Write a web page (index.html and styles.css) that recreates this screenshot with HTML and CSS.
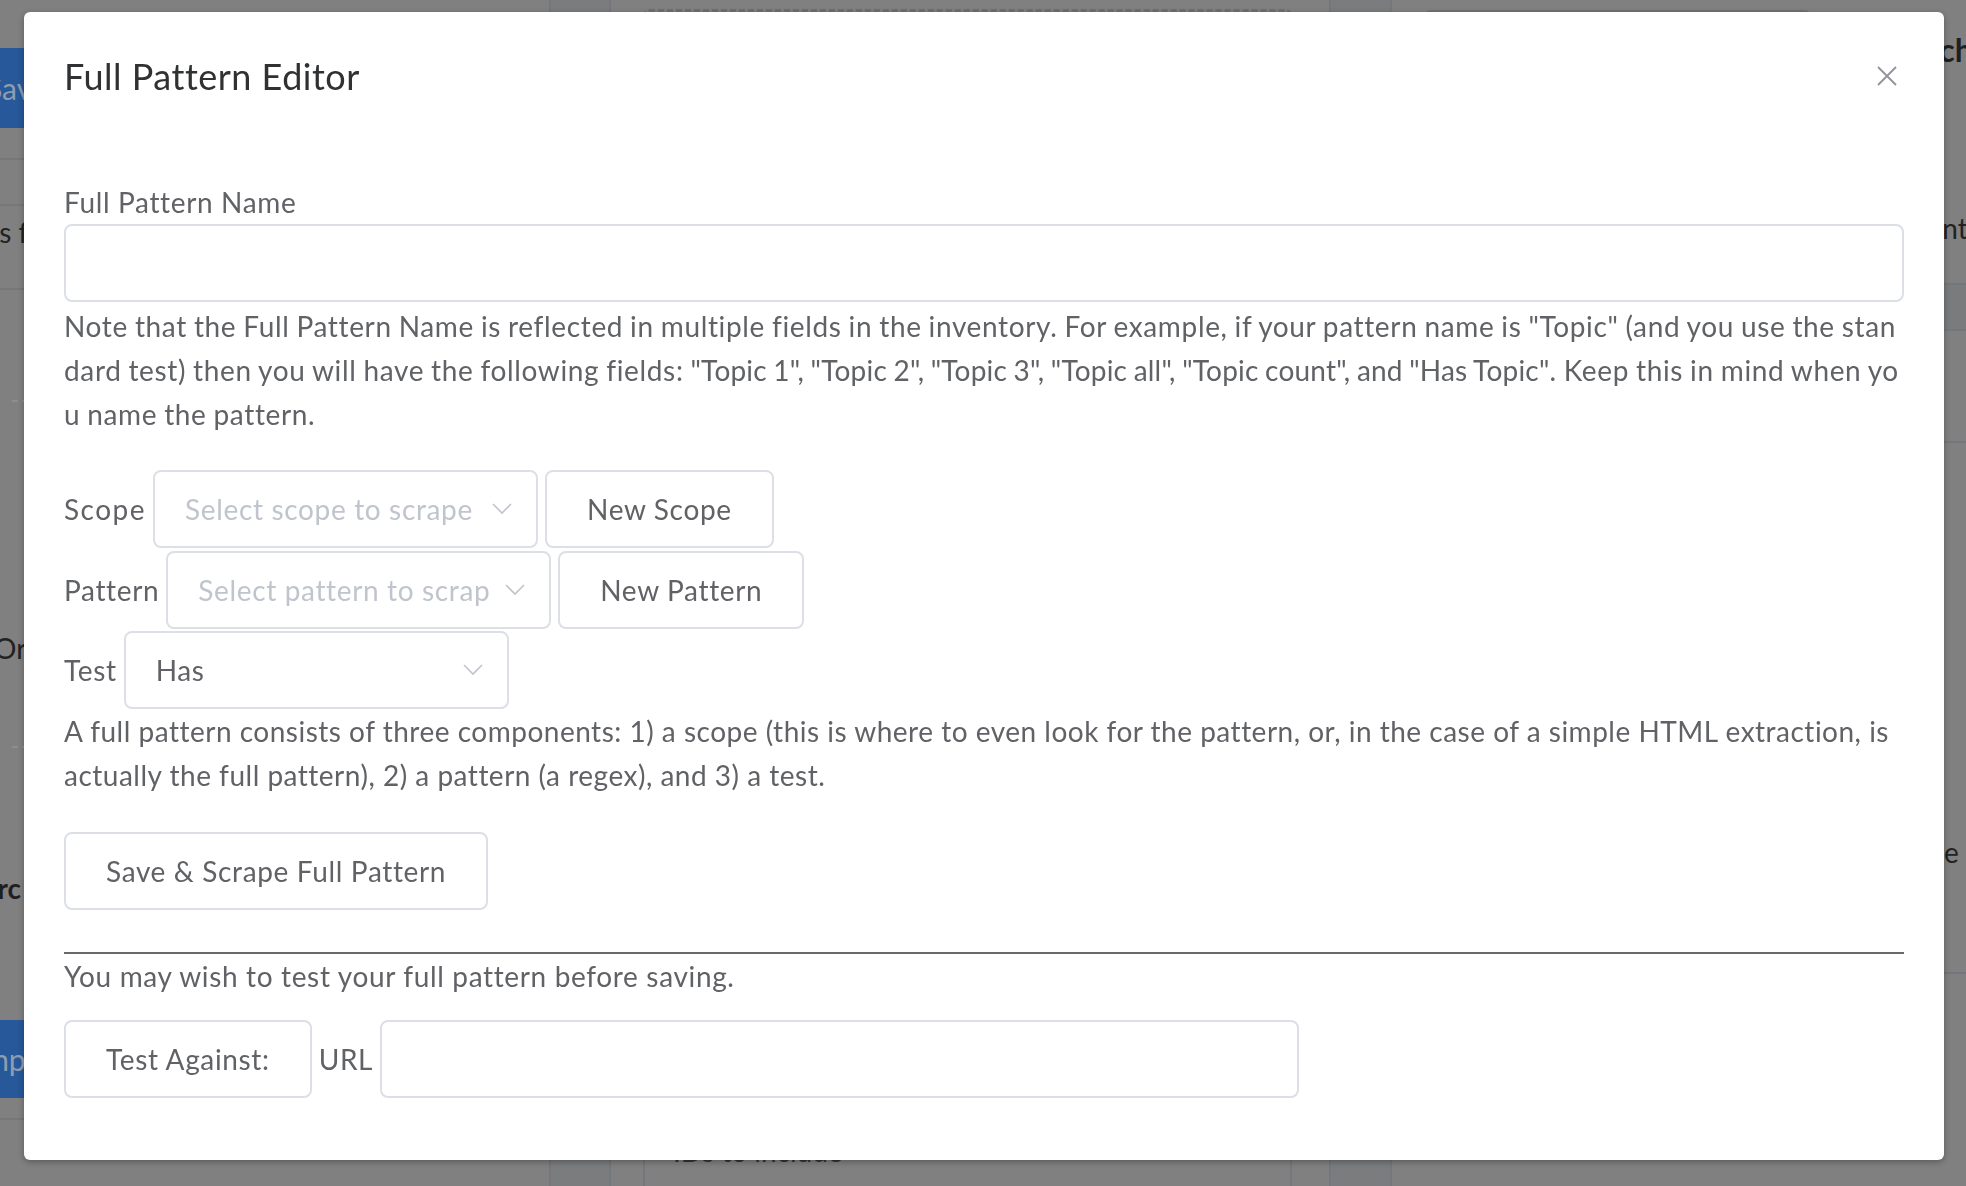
FILE: index.html
```html
<!DOCTYPE html>
<html lang="en">
<head>
<meta charset="utf-8">
<title>Full Pattern Editor</title>
<link rel="stylesheet" href="styles.css">
</head>
<body>
<div class="page">
  <div class="col col-left">
    <div class="bg-btn bg-btn-top">Save</div>
    <div class="bg-row bg-row-a"></div>
    <div class="bg-row bg-row-b"></div>
    <div class="bg-row bg-row-c"><span class="bg-cell">Items for</span></div>
    <div class="bg-dash bg-dash-1"></div>
    <div class="bg-text bg-text-orc">Orc</div>
    <div class="bg-dash bg-dash-2"></div>
    <div class="bg-text bg-text-bold">Arc</div>
    <div class="bg-btn bg-btn-bottom">Imp</div>
    <div class="bg-row bg-row-end"></div>
  </div>
  <div class="col col-strip"></div>
  <div class="col col-mid">
    <div class="bg-dashed-box"></div>
    <div class="bg-table">
      <div class="bg-mid-text">IDs to include</div>
    </div>
  </div>
  <div class="col col-strip2"></div>
  <div class="col col-right">
    <div class="bg-solid-box"></div>
    <div class="bg-right">
      <div class="bg-r1">Search</div>
      <div class="bg-r2">Content</div>
      <div class="bg-band"></div>
      <div class="bg-r3"></div>
      <div class="bg-r4">Some f</div>
      <div class="bg-r5"></div>
    </div>
  </div>
</div>

<div class="dialog-wrapper">
  <div class="dialog">
    <div class="dialog-header">
      <span class="dialog-title">Full Pattern Editor</span>
      <button class="dialog-close" aria-label="Close">
        <svg width="20" height="20" viewBox="0 0 20 20"><path d="M1 1 L19 19 M19 1 L1 19" stroke="#909399" stroke-width="1.8" fill="none"/></svg>
      </button>
    </div>
    <div class="dialog-body">
      <div class="field-label">Full Pattern Name</div>
      <div class="text-input"></div>
      <p class="note note-1">Note that the Full Pattern Name is reflected in multiple fields in the inventory. For example, if your pattern name is "Topic" (and you use the standard test) then you will have the following fields: <span class="terms">"Topic 1", "Topic 2", "Topic 3", "Topic all", "Topic count", and "Has Topic"</span>. Keep this in mind when you name the pattern.</p>

      <div class="inline-row row-first">
        <span class="row-label label-scope">Scope</span>
        <div class="select"><span class="select-text placeholder">Select scope to scrape</span><svg class="chev" width="20" height="12" viewBox="0 0 20 12"><path d="M1 1 L10 10 L19 1" stroke="#c0c4cc" stroke-width="1.6" fill="none"/></svg></div>
        <button class="btn">New Scope</button>
      </div>
      <div class="inline-row">
        <span class="row-label">Pattern</span>
        <div class="select"><span class="select-text placeholder">Select pattern to scrape</span><svg class="chev" width="20" height="12" viewBox="0 0 20 12"><path d="M1 1 L10 10 L19 1" stroke="#c0c4cc" stroke-width="1.6" fill="none"/></svg></div>
        <button class="btn">New Pattern</button>
      </div>
      <div class="inline-row row-last">
        <span class="row-label">Test</span>
        <div class="select"><span class="select-text">Has</span><svg class="chev" width="20" height="12" viewBox="0 0 20 12"><path d="M1 1 L10 10 L19 1" stroke="#c0c4cc" stroke-width="1.6" fill="none"/></svg></div>
      </div>
      <p class="note note-2">A full pattern consists of three components: 1) a scope (this is where to even look for the pattern, or, in the case of a simple HTML extraction, is actually the full pattern), 2) a pattern (a regex), and 3) a test.</p>

      <button class="btn btn-save">Save &amp; Scrape Full Pattern</button>

      <hr class="divider">
      <p class="note note-3">You may wish to test your full pattern before saving.</p>

      <div class="inline-row test-row">
        <button class="btn">Test Against:</button>
        <span class="row-label">URL</span>
        <div class="text-input url-input"></div>
      </div>
    </div>
  </div>
</div>
</body>
</html>
```

FILE: styles.css
```css
html, body {
  margin: 0;
  padding: 0;
  height: 100%;
  overflow: hidden;
}

body {
  background: #808080;
  font-family: "Lato", "Liberation Sans", sans-serif;
}

/* ---------- dimmed background page ---------- */
.page {
  display: flex;
  height: 100vh;
  color: #1b1c1d;
  font-size: 28px;
}

.col {
  position: relative;
  box-sizing: border-box;
  flex: none;
}

.col-left {
  width: 563px;
  margin-left: -14px;
}

.col-strip {
  width: 62px;
  background: #7b7c7e;
  border-left: 2px solid #74777b;
  border-right: 2px solid #74777b;
}

.col-mid {
  width: 718px;
  padding: 9px 37px 0 32px;
  display: flex;
  flex-direction: column;
}

.col-strip2 {
  width: 63px;
  background: #7b7c7e;
  border-left: 2px solid #74777b;
  border-right: 2px solid #74777b;
}

.col-right {
  flex: 1;
  padding-top: 10px;
}

.bg-btn {
  height: 80px;
  background: #27589a;
  color: #8e9db0;
  line-height: 80px;
  font-size: 30px;
}

.bg-btn-top {
  margin-top: 48px;
}

.bg-row {
  border-bottom: 2px solid #75787b;
}

.bg-row-a {
  height: 30px;
}

.bg-row-b {
  height: 44px;
}

.bg-row-c {
  height: 84px;
  padding-top: 4px;
  box-sizing: border-box;
  line-height: 44px;
  color: #222;
}

.bg-cell {
  margin-left: -42px;
}

.bg-dash {
  border-top: 2px dashed #8e8e8e;
  margin-left: 26px;
}

.bg-dash-1 {
  margin-top: 110px;
}

.bg-text {
  line-height: 44px;
  color: #222;
}

.bg-text-orc {
  margin-top: 224px;
  margin-left: 8px;
}

.bg-dash-2 {
  margin-top: 76px;
}

.bg-text-bold {
  font-weight: 700;
  color: #1f1f1f;
  margin-top: 118px;
  margin-left: -8px;
}

.bg-btn-bottom {
  margin-top: 110px;
  margin-left: -10px;
  height: 78px;
  line-height: 78px;
}

.bg-row-end {
  height: 20px;
}

.bg-dashed-box {
  height: 60px;
  border: 3px dashed #6e6f71;
  border-radius: 6px;
}

.bg-table {
  margin-top: auto;
  height: 60px;
  border-left: 2px solid #74777b;
  border-right: 2px solid #74777b;
}

.bg-mid-text {
  padding-left: 28px;
  margin-top: 10px;
  color: #333;
  font-size: 28px;
  line-height: 30px;
}

.bg-solid-box {
  margin-left: 31px;
  width: 383px;
  height: 50px;
  border: 3px solid #707173;
  border-radius: 8px;
}

.bg-right {
  position: absolute;
  left: 485px;
  top: 0;
  width: 300px;
}

.bg-r1 {
  margin-top: 28px;
  font-size: 32px;
  line-height: 44px;
  font-weight: 700;
  color: #1f1f1f;
}

.bg-r2 {
  margin-top: 134px;
  line-height: 44px;
  color: #222;
  margin-left: 31px;
}

.bg-band {
  margin-top: 33px;
  height: 44px;
  background: #7a7b7d;
  border-top: 2px solid #73767a;
  border-bottom: 2px solid #73767a;
}

.bg-r3 {
  height: 110px;
  border-bottom: 2px solid #73767a;
}

.bg-r4 {
  margin-top: 387px;
  line-height: 44px;
  color: #222;
  margin-left: 13px;
}

.bg-r5 {
  margin-top: 98px;
  border-top: 2px solid #73767a;
}

/* ---------- dialog ---------- */
.dialog-wrapper {
  position: fixed;
  inset: 0;
  padding: 12px 0 0 24px;
}

.dialog {
  width: 1920px;
  background: #fff;
  border-radius: 6px;
  box-shadow: 0 2px 6px rgba(0, 0, 0, 0.3);
  color: #606266;
  font-size: 28px;
  letter-spacing: 0.65px;
}

.dialog-header {
  display: flex;
  justify-content: space-between;
  align-items: center;
  padding: 40px 40px 20px;
}

.dialog-title {
  font-size: 36px;
  line-height: 48px;
  color: #303133;
  letter-spacing: 0.5px;
}

.dialog-close {
  border: 0;
  background: none;
  padding: 0;
  margin-right: 7px;
  display: flex;
}

.dialog-body {
  padding: 60px 40px 62px;
  line-height: 44px;
}

.field-label {
  line-height: 44px;
}

.text-input {
  box-sizing: border-box;
  height: 78px;
  border: 2px solid #dcdfe6;
  border-radius: 8px;
  background: #fff;
}

.note {
  margin: 0;
  line-height: 44px;
}

.note-1 {
  margin-top: 2px;
  word-break: break-all;
  word-spacing: -0.85px;
}

.terms {
  letter-spacing: 0.2px;
}

.note-2 {
  letter-spacing: 0.5px;
}

.inline-row {
  display: flex;
  align-items: center;
  gap: 7px;
  height: 78px;
  margin-bottom: 2.5px;
}

.row-first {
  margin-top: 34px;
}

.row-last {
  margin-bottom: 0;
}

.row-label {
  white-space: nowrap;
}

.label-scope {
  letter-spacing: 1.5px;
}

.select {
  box-sizing: border-box;
  width: 385px;
  height: 78px;
  border: 2px solid #dcdfe6;
  border-radius: 8px;
  display: flex;
  align-items: center;
  padding: 0 24px 0 30px;
}

.select-text {
  flex: 1;
  overflow: hidden;
  white-space: nowrap;
  margin-right: 16px;
}

.placeholder {
  color: #c0c4cc;
}

.chev {
  flex: none;
}

.btn {
  box-sizing: border-box;
  height: 78px;
  padding: 0 40px;
  border: 2px solid #dcdfe6;
  border-radius: 8px;
  background: #fff;
  color: #606266;
  font-family: inherit;
  font-size: 28px;
  letter-spacing: inherit;
  white-space: nowrap;
}

.btn-save {
  display: block;
  margin-top: 35px;
}

.divider {
  margin: 42px 0 0;
  border: 0;
  border-top: 2px solid #68696b;
  height: 0;
}

.test-row {
  margin-top: 22px;
  margin-bottom: 0;
}

.url-input {
  width: 919px;
}
```
